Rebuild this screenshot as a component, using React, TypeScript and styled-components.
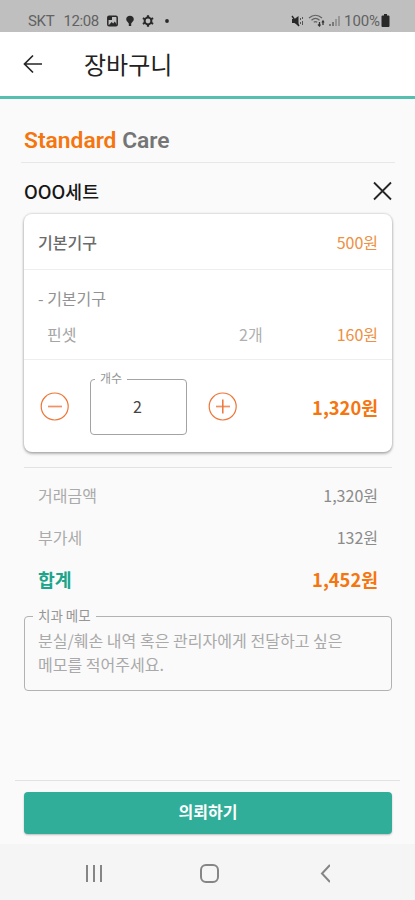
import React from "react";
import styled, { createGlobalStyle } from "styled-components";

const colors = {
  orange: "#f5750f",
  orangeSoft: "#ee8f42",
  teal: "#31ae9a",
  tealText: "#1da58c",
  page: "#fafafa",
};

const GlobalStyle = createGlobalStyle`
  * { box-sizing: border-box; }
  body {
    margin: 0;
    background: ${colors.page};
    font-family: "Noto Sans CJK KR", "Noto Sans", sans-serif;
    font-size: 16px;
  }
`;

const Screen = styled.div`
  width: 415px;
  height: 900px;
  display: flex;
  flex-direction: column;
  overflow: hidden;
  background: ${colors.page};
`;

const StatusBar = styled.div`
  height: 32px;
  flex: none;
  display: flex;
  align-items: center;
  justify-content: space-between;
  padding: 9px 25px 0 28px;
  background: #bfbfbf;
  color: #626262;
  font: 400 15px/18px Roboto, sans-serif;
`;

const StatusGroup = styled.div<{ $gap: number }>`
  display: flex;
  align-items: center;
  gap: ${(p) => p.$gap}px;
  svg { display: block; }
`;

const StatusText = styled.span<{ $end?: number; $track?: number }>`
  margin-right: ${(p) => p.$end ?? 0}px;
  letter-spacing: ${(p) => p.$track ?? 0}px;
`;

const AppBar = styled.header`
  height: 67px;
  flex: none;
  display: flex;
  align-items: center;
  padding: 0 24px 0 22px;
  background: #fff;
  border-bottom: 3px solid #55c0af;
`;

const IconButton = styled.button`
  display: flex;
  padding: 0;
  border: 0;
  background: none;
  svg { display: block; }
`;

const PageTitle = styled.h1`
  margin: 0 0 0 40px;
  color: #222;
  font-size: 24px;
  font-weight: 400;
  line-height: 34px;
`;

const Content = styled.main`
  flex: 1;
  padding: 0 23px 0 24px;
`;

const CareTitle = styled.h2`
  height: 64px;
  margin: 0 -3px 0 -3px;
  padding: 27px 3px 0;
  border-bottom: 1px solid #e8e8e8;
  color: #757575;
  font: 600 22.8px/30px Roboto, sans-serif;
  em { color: ${colors.orange}; font-style: normal; }
`;

const SetHeader = styled.div`
  height: 51px;
  display: flex;
  align-items: center;
  justify-content: space-between;
  padding-top: 5px;
`;

const SetName = styled.h3`
  margin: 0;
  color: #171717;
  font-size: 18.3px;
  font-weight: 500;
  line-height: 26px;
`;

const Card = styled.section`
  height: 238px;
  border-radius: 8px;
  background: #fff;
  box-shadow: 0 2px 3px rgba(0, 0, 0, 0.25), 0 0 2px 1px rgba(0, 0, 0, 0.12);
`;

const CardSection = styled.div<{ $height: number; $top?: number }>`
  height: ${(p) => p.$height}px;
  padding: ${(p) => p.$top ?? 0}px 14px 0;
  border-bottom: 1px solid #eee;
  &:last-child { border-bottom: 0; }
`;

const Row = styled.div<{ $height: number }>`
  height: ${(p) => p.$height}px;
  display: flex;
  align-items: center;
  justify-content: space-between;
`;

const DetailRow = styled.div`
  height: 36px;
  display: grid;
  grid-template-columns: 1fr 60px 79px;
  align-items: center;
  padding-left: 9px;
  > :last-child { text-align: right; }
`;

const Label = styled.span<{ $tone: string; $weight?: number }>`
  color: ${(p) => p.$tone};
  font-weight: ${(p) => p.$weight ?? 400};
  line-height: 24px;
`;

const Price = styled.span<{ $tone?: string }>`
  color: ${(p) => p.$tone ?? colors.orangeSoft};
  line-height: 24px;
`;

const Total = styled.strong<{ $tone?: string }>`
  color: ${(p) => p.$tone ?? colors.orange};
  font-size: 18.3px;
  font-weight: 700;
  line-height: 26px;
`;

const QuantityRow = styled.div`
  display: flex;
  align-items: flex-start;
  > button { margin: 20px 0 0 2px; }
  > strong { margin: 23px 0 0 auto; }
`;

const Outline = styled.fieldset<{ $width: number; $height: number }>`
  width: ${(p) => p.$width}px;
  height: ${(p) => p.$height}px;
  margin: 0;
  min-width: 0;
  padding: 0;
  border: 1px solid #b2b2b2;
  border-radius: 4px;
`;

const QuantityOutline = styled(Outline)`
  margin: 0 19px 0 20px;
  border-color: #a3a3a3;
`;

const Legend = styled.legend<{ $start: number; $size: number; $pad: number }>`
  height: 16px;
  margin-left: ${(p) => p.$start}px;
  padding: 0 ${(p) => p.$pad}px;
  color: #969696;
  font-size: ${(p) => p.$size}px;
  line-height: 14px;
`;

const QuantityValue = styled.div`
  padding: 7px 2px 0 0;
  color: #444;
  text-align: center;
  line-height: 24px;
`;

const Summary = styled.div`
  margin-top: 15px;
  padding: 6px 14px 0;
  border-top: 1px solid #e1e2e4;
`;

const Memo = styled(Outline)`
  margin-top: 8px;
`;

const MemoText = styled.p`
  margin: 4px 13px 0;
  color: #a9a9a9;
  font-size: 16.05px;
  line-height: 24px;
`;

const ActionBar = styled.footer`
  height: 64px;
  flex: none;
  margin: 0 15px;
  padding: 11px 8px 0 9px;
  border-top: 1px solid #e2e2e2;
`;

const SubmitButton = styled.button`
  width: 100%;
  height: 42px;
  padding: 0 0 4px;
  border: 0;
  border-radius: 4px;
  background: ${colors.teal};
  box-shadow: 0 1px 2px rgba(0, 0, 0, 0.25);
  color: #fff;
  font: 700 16px/24px "Noto Sans CJK KR", sans-serif;
`;

const SystemNav = styled.nav`
  height: 56px;
  flex: none;
  display: grid;
  grid-template-columns: 115px 117px 14px;
  padding: 19px 81px 0 84px;
  background: #f5f5f5;
`;

const CircleIcon = ({ plus }: { plus?: boolean }) => (
  <svg width="30" height="30" viewBox="0 0 30 30" fill="none" stroke="#ee7537" strokeWidth="1.2">
    <circle cx="14.7" cy="15.500" r="13.500" />
    <path d="M8 15.500h14" stroke="#f09166" strokeWidth="1.7" />
    {plus && <path d="M14.800 8.500v14" strokeWidth="1.5" />}
  </svg>
);

export default function App() {
  return (
    <Screen>
      <GlobalStyle />
      <StatusBar>
        <StatusGroup $gap={8}>
          <StatusText $end={1} $track={-0.3}>SKT</StatusText>
          <StatusText $track={-0.4}>12:08</StatusText>
          <svg width="11" height="12" viewBox="0 0 11 12">
            <rect x=".8" y="1.2" width="9.4" height="9.6" rx="1.3" fill="none" stroke="#292929" strokeWidth="1.5" />
            <path d="M1 2h4v3H1zM2 10l2.6-3 1.6 1.5L7.8 6.5 10 10z" fill="#292929" />
          </svg>
          <svg width="8" height="12" viewBox="0 0 8 12" fill="#292929">
            <path d="M4 .8C1.8.8.2 2.300.2 4.300.2 6 2 7.200 2.800 8.500V11h2.400V8.500C6 7.200 7.800 6 7.800 4.300 7.800 2.300 6.200.8 4 .8z" />
          </svg>
          <svg width="12" height="12" viewBox="0 0 12 12" fill="none" stroke="#292929">
            <circle cx="6" cy="6" r="3.400" strokeWidth="2" />
            <path d="M6 .3v2M6 9.700v2M.9 3.100l1.800 1M9.300 7.900l1.800 1M.9 8.900l1.800-1M9.300 4.100l1.800-1" strokeWidth="2.200" />
          </svg>
          <svg width="14" height="12" viewBox="0 0 14 12">
            <circle cx="5" cy="6" r="1.9" fill="#292929" />
          </svg>
        </StatusGroup>
        <StatusGroup $gap={4}>
          <svg width="13" height="12" viewBox="0 0 13 12" fill="none" stroke="#292929">
            <path d="M1 4h2.500L7.500 1v10L3.500 8H1z" fill="#292929" stroke="none" />
            <path d="M1 1l7 10" strokeWidth="1.4" />
            <path d="M9.500 3v2M9.500 7v2M11.500 2v2M11.500 6v4" stroke="#555" />
          </svg>
          <svg width="17" height="13" viewBox="0 0 17 13" fill="none" stroke="#626262" strokeWidth="1.300">
            <path d="M1 4c4-3.600 9-3.600 13 0M3.500 6.200c2.500-2.200 5.500-2.200 8 0M5.800 8.300q1.700-1.400 3.400 0" />
            <path d="M11.500 12V8M10 10.500l1.500 1.500 1-1.500M15 7v4M14 8.500L15 7l1 1.500" stroke="#333" />
          </svg>
          <svg width="11" height="12" viewBox="0 0 11 12" stroke="#626262" strokeWidth="1.500">
            <path d="M1 11V9M4 11V7" />
            <path d="M7 11V4M10 11V1" stroke="#8a8a8a" />
          </svg>
          <StatusGroup $gap={1}>
            <StatusText $track={-0.1}>100%</StatusText>
            <svg width="9" height="13" viewBox="0 0 9 13" fill="#292929">
              <path d="M3 0h3v1.500h1.500q1 0 1 1V12q0 1-1 1h-6q-1 0-1-1V2.500q0-1 1-1H3z" />
            </svg>
          </StatusGroup>
        </StatusGroup>
      </StatusBar>

      <AppBar>
        <IconButton aria-label="뒤로">
          <svg width="22" height="22" viewBox="0 0 22 22" fill="none" stroke="#262626" strokeWidth="1.700">
            <path d="M20 11H3M11 2.500L2.500 11l8.500 8.500" />
          </svg>
        </IconButton>
        <PageTitle>장바구니</PageTitle>
      </AppBar>

      <Content>
        <CareTitle><em>Standard</em> Care</CareTitle>
        <SetHeader>
          <SetName>OOO세트</SetName>
          <IconButton aria-label="삭제">
            <svg width="20" height="20" viewBox="0 0 20 20" fill="none" stroke="#262626" strokeWidth="1.800">
              <path d="M2 1.500l17 17M19 1.500l-17 17" />
            </svg>
          </IconButton>
        </SetHeader>

        <Card>
          <CardSection $height={56}>
            <Row $height={55}>
              <Label $tone="#6b6b6b" $weight={500}>기본기구</Label>
              <Price>500원</Price>
            </Row>
          </CardSection>
          <CardSection $height={90} $top={10}>
            <Row $height={36}>
              <Label $tone="#929292">- 기본기구</Label>
            </Row>
            <DetailRow>
              <Label $tone="#a5a5a5">핀셋</Label>
              <Label $tone="#b0b0b0">2개</Label>
              <Price>160원</Price>
            </DetailRow>
          </CardSection>
          <CardSection $height={92} $top={11}>
            <QuantityRow>
              <IconButton aria-label="수량 줄이기"><CircleIcon /></IconButton>
              <QuantityOutline $width={97} $height={64}>
                <Legend $start={4} $size={12} $pad={5}>개수</Legend>
                <QuantityValue>2</QuantityValue>
              </QuantityOutline>
              <IconButton aria-label="수량 늘리기"><CircleIcon plus /></IconButton>
              <Total>1,320원</Total>
            </QuantityRow>
          </CardSection>
        </Card>

        <Summary>
          <Row $height={42}>
            <Label $tone="#aaa">거래금액</Label>
            <Price $tone="#8b8b8b">1,320원</Price>
          </Row>
          <Row $height={42}>
            <Label $tone="#aaa">부가세</Label>
            <Price $tone="#8b8b8b">132원</Price>
          </Row>
          <Row $height={42}>
            <Total $tone={colors.tealText}>합계</Total>
            <Total>1,452원</Total>
          </Row>
        </Summary>

        <Memo $width={368} $height={83}>
          <Legend $start={8} $size={13.5} $pad={5}>치과 메모</Legend>
          <MemoText>
            분실/훼손 내역 혹은 관리자에게 전달하고 싶은
            <br />
            메모를 적어주세요.
          </MemoText>
        </Memo>
      </Content>

      <ActionBar>
        <SubmitButton>의뢰하기</SubmitButton>
      </ActionBar>

      <SystemNav>
        <svg width="20" height="20" viewBox="0 0 20 20" stroke="#858585" strokeWidth="2">
          <path d="M3 2v17M10 2v17M17 2v17" />
        </svg>
        <svg width="20" height="20" viewBox="0 0 20 20" fill="none" stroke="#858585" strokeWidth="2">
          <rect x="2" y="2" width="17" height="17" rx="5" />
        </svg>
        <svg width="14" height="20" viewBox="0 0 14 20" fill="none" stroke="#858585" strokeWidth="2">
          <path d="M14 2L6 10.500l8 8.500" />
        </svg>
      </SystemNav>
    </Screen>
  );
}
